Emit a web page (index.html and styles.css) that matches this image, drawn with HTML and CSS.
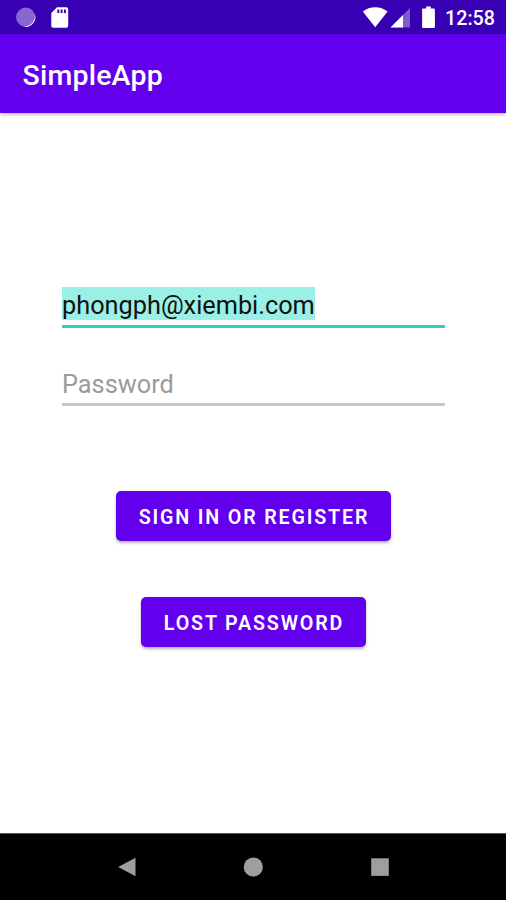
FILE: index.html
```
<!DOCTYPE html>
<html lang="en">
<head>
    <meta charset="UTF-8">
    <meta name="viewport" content="width=device-width, initial-scale=1.0">
    <title>SimpleApp</title>
    <link rel="stylesheet" href="styles.css">
</head>
<body>

    <div class="status-bar">
        <svg class="status-left" width="60" height="34" viewBox="0 0 60 34">
            <!-- Loading circle -->
            <circle cx="15.7" cy="17.2" r="9.6" fill="#8a66d2"/>
            <path d="M24.6 13.5a9.7 9.7 0 0 1-11.5 13A10.6 10.6 0 0 0 24.6 13.5z" fill="#fff"/>
            <!-- SD card -->
            <path d="M47 7.3h9.3a1.9 1.9 0 0 1 1.9 1.9v16.6a1.9 1.9 0 0 1-1.9 1.9H43.2a1.9 1.9 0 0 1-1.9-1.9V13z" fill="#fff"/>
            <path d="M48.3 9.4v3.6M51.6 9.4v3.6M54.9 9.4v3.6" stroke="#3700b3" stroke-width="1.9"/>
        </svg>
        <svg class="status-right" width="76" height="34" viewBox="0 0 76 34">
            <!-- Wifi -->
            <path d="M13.2 27.2L.8 11.5a20 20 0 0 1 24.8 0z" fill="#fff"/>
            <!-- Signal -->
            <path d="M28.5 27.6L48 8v19.6z" fill="#fff" fill-opacity=".35"/>
            <path d="M28.5 27.6L41 15v12.6z" fill="#fff"/>
            <!-- Battery -->
            <path d="M64.2 6.5h4.6v2.1h2.9a1.2 1.2 0 0 1 1.2 1.2v17a1.2 1.2 0 0 1-1.2 1.2H61.3a1.2 1.2 0 0 1-1.2-1.2v-17a1.2 1.2 0 0 1 1.2-1.2h2.9z" fill="#fff"/>
        </svg>
        <span class="clock">12:58</span>
    </div>

    <header class="app-bar">
        <h1>SimpleApp</h1>
    </header>

    <form class="login-form">
        <div class="field active"><span class="selected-text">phongph@xiembi.com</span></div>
        <input class="field password" type="password" placeholder="Password">
        <button class="sign-in" type="button">SIGN IN OR REGISTER</button>
        <button class="lost-password" type="button">LOST PASSWORD</button>
    </form>

    <nav class="nav-bar">
        <svg width="20" height="20" viewBox="0 0 20 20"><path d="M1.2 10L18.5 .7v18.6z"/></svg>
        <svg width="20" height="20" viewBox="0 0 20 20"><circle cx="10.3" cy="10" r="9.6"/></svg>
        <svg width="20" height="20" viewBox="0 0 20 20"><path d="M1.2 1.3h17.6v17.6H1.2z"/></svg>
    </nav>

</body>
</html>
```

FILE: styles.css
```
* {
    box-sizing: border-box;
}
body {
    font-family: Roboto, sans-serif;
    background-color: #fff;
    margin: 0;
    height: 900px;
    display: flex;
    flex-direction: column;
    overflow: hidden;
}
.status-bar {
    height: 34px;
    background-color: #3700b3;
    display: flex;
    align-items: center;
    padding: 0 11px 0 10px;
}
.status-right {
    margin-left: auto;
}
.clock {
    color: white;
    font-size: 19.7px;
    font-weight: 500;
    line-height: 32px;
    padding-top: 4px;
    margin-left: 7px;
}
.app-bar {
    height: 79px;
    background-color: #6200ee;
    display: flex;
    align-items: center;
    padding: 3px 22.5px 0;
    box-shadow: 0 1px 4px rgba(0, 0, 0, 0.35);
}
h1 {
    color: white;
    font-size: 28.5px;
    font-weight: 500;
    letter-spacing: 0.2px;
    margin: 0;
}
.login-form {
    flex: 1;
    display: flex;
    flex-direction: column;
    align-items: center;
    padding-top: 174px;
}
.field {
    width: 383px;
    height: 41px;
    border: none;
    border-bottom: 3px solid #c9c9c9;
    padding: 0;
    font-family: inherit;
    font-size: 25.3px;
    line-height: 37px;
    color: #111;
    background: none;
    outline: none;
}
.active {
    border-color: #34cfbc; /* Teal accent while focused */
}
.selected-text {
    display: inline-block;
    height: 33px;
    padding-left: 0.5px;
    background-color: #9af0e4;
}
.password {
    margin-top: 37px;
    padding: 0 0 0 0.5px;
}
.password::placeholder {
    color: #9b9b9b;
    opacity: 1;
}
button {
    height: 50px;
    background-color: #6200ee;
    color: white;
    border: none;
    border-radius: 5px;
    padding: 2px 0 0 2px;
    font-family: inherit;
    font-size: 19.7px;
    font-weight: 600;
    letter-spacing: 1.83px;
    box-shadow: 0 2px 3px rgba(0, 0, 0, 0.3);
}
.sign-in {
    width: 275px;
    margin-top: 85px;
}
.lost-password {
    width: 225px;
    margin-top: 56px;
}
.nav-bar {
    height: 67px;
    background-color: #000;
    border-top: 1px solid #555;
    display: flex;
    justify-content: center;
    align-items: center;
    gap: 106.5px;
}
.nav-bar svg {
    fill: #9e9e9e;
}
```
